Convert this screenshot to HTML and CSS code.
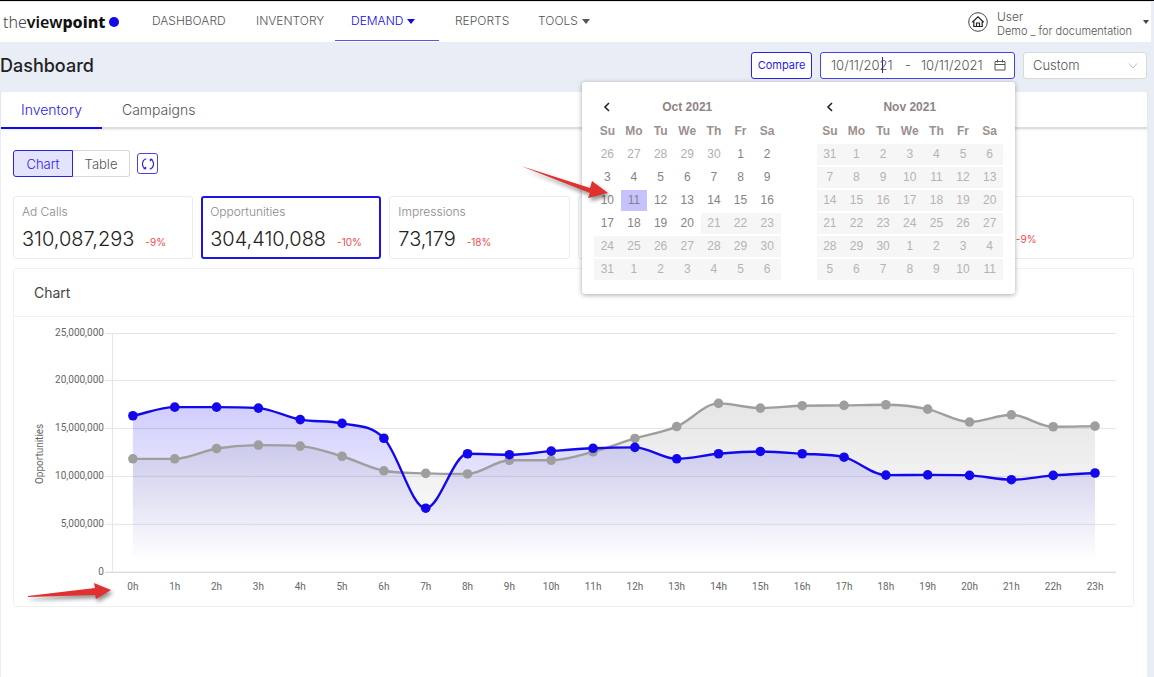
FILE: index.html
```html
<!DOCTYPE html>
<html lang="en">
<head>
    <meta charset="UTF-8">
    <meta name="viewport" content="width=device-width, initial-scale=1.0">
    <title>Dashboard</title>
    <link rel="stylesheet" href="styles.css">
</head>
<body>
    <header class="topbar">
        <a class="logo" href="#"><span class="logo-light">the</span><span class="logo-mid">view</span><span class="logo-bold">point</span><span class="logo-dot"></span></a>
        <nav class="menu">
            <a href="#">DASHBOARD</a>
            <a href="#">INVENTORY</a>
            <a href="#" class="active">DEMAND<span class="caret"></span></a>
            <a href="#">REPORTS</a>
            <a href="#">TOOLS<span class="caret"></span></a>
        </nav>
        <div class="user">
            <svg class="user-icon" viewBox="0 0 20 20" width="20" height="20">
                <circle cx="10" cy="10" r="9.3" fill="none" stroke="#444" stroke-width="1"/>
                <path d="M4.300 10.200L10 4.800l5.700 5.400M5.800 9.500V14.500H14.200V9.500M8.500 14.500v-3.500h3v3.500" fill="none" stroke="#222" stroke-width="1.200"/>
            </svg>
            <div class="user-text">
                <div class="user-name">User</div>
                <div class="user-account">Demo _ for documentation</div>
            </div>
            <span class="caret small"></span>
        </div>
    </header>

    <div class="titlebar">
        <h1>Dashboard</h1>
        <div class="filters">
            <button class="compare">Compare</button>
            <div class="range">
                <input type="text" aria-label="Start date" value="10/11/2021">
                <span class="dash">-</span>
                <input type="text" aria-label="End date" value="10/11/2021">
                <span class="text-cursor"></span>
                <svg viewBox="0 0 12 12" width="12" height="12" fill="none" stroke="#555">
                    <path d="M1 2.500h10v8.500h-10zM1 5.500h10M3.500 .5v3M8.500 .5v3"/>
                </svg>
                <div class="picker">
                    <div class="month" id="oct"></div>
                    <div class="month" id="nov"></div>
                    <svg class="pointer pointer-day" viewBox="0 0 92 34" width="92" height="34">
                        <path d="M1 1L70 23L72 16L88 28L68 33L70 28Z"/>
                    </svg>
                </div>
            </div>
            <div class="select">
                <select aria-label="Period">
                    <option>Custom</option>
                </select>
                <svg viewBox="0 0 10 6" width="10" height="6" fill="none" stroke="#bbb">
                    <path d="M1 .5l4 4.500l4-4.500"/>
                </svg>
            </div>
        </div>
    </div>

    <main>
        <div class="tabs">
            <a href="#" class="active">Inventory</a>
            <a href="#">Campaigns</a>
        </div>

        <div class="content">
            <div class="tools">
                <div class="toggle">
                    <button class="active">Chart</button>
                    <button>Table</button>
                </div>
                <button class="refresh" aria-label="Refresh">
                    <svg viewBox="0 0 14 14" width="14" height="14" fill="none" stroke="#2b20e8" stroke-width="1.200">
                        <path d="M5.300 1.800A5.400 5.400 0 0 0 4.300 11.700M8.700 12.200A5.400 5.400 0 0 0 9.700 2.300"/>
                        <path d="M2.600 11.700H4.600V9.700M11.400 2.300H9.400V4.300"/>
                    </svg>
                </button>
            </div>

            <div class="cards">
                <div class="card">
                    <div class="label">Ad Calls</div>
                    <div class="figures"><span class="value">310,087,293</span><span class="delta">-9%</span></div>
                </div>
                <div class="card active">
                    <div class="label">Opportunities</div>
                    <div class="figures"><span class="value">304,410,088</span><span class="delta">-10%</span></div>
                </div>
                <div class="card">
                    <div class="label">Impressions</div>
                    <div class="figures"><span class="value">73,179</span><span class="delta">-18%</span></div>
                </div>
                <div class="card"></div>
                <div class="card"></div>
                <div class="card">
                    <div class="label"></div>
                    <div class="figures"><span class="value"></span><span class="delta">-9%</span></div>
                </div>
            </div>

            <section class="panel">
                <h2>Chart</h2>
                <svg id="chart" viewBox="0 0 1120 289">
                    <defs>
                        <linearGradient id="blueFill" gradientUnits="userSpaceOnUse" x1="0" y1="88" x2="0" y2="244">
                            <stop offset="0" stop-color="#1308eb" stop-opacity="0.2"/>
                            <stop offset="1" stop-color="#1308eb" stop-opacity="0"/>
                        </linearGradient>
                        <linearGradient id="grayFill" gradientUnits="userSpaceOnUse" x1="0" y1="86" x2="0" y2="244">
                            <stop offset="0" stop-color="#808080" stop-opacity="0.2"/>
                            <stop offset="1" stop-color="#808080" stop-opacity="0"/>
                        </linearGradient>
                    </defs>
                </svg>
                <svg class="pointer pointer-axis" viewBox="0 0 90 24" width="90" height="24">
                    <path d="M1 14L68 6L67 1L84 8L69 17L68 13L1 15Z"/>
                </svg>
            </section>
        </div>
    </main>

    <script src="script.js"></script>
</body>
</html>
```
FILE: styles.css
```css
* {
    box-sizing: border-box;
}
body {
    margin: 0;
    min-height: 100vh;
    display: flex;
    flex-direction: column;
    font-family: Inter, "Open Sans", sans-serif;
    font-weight: 300;
    font-size: 13px;
    color: #555;
    background: #e9eef6;
    border-top: 1px solid #000;
}
a {
    color: inherit;
    text-decoration: none;
}
button, input, select {
    font: inherit;
    color: inherit;
    margin: 0;
}
.caret {
    display: inline-block;
    margin-left: 4px;
    border: 4px solid transparent;
    border-top: 5px solid currentColor;
    border-bottom: 0;
    vertical-align: 1px;
}
.caret.small {
    border-width: 4px 3px 0;
    color: #444;
}

/* top bar */
.topbar {
    display: flex;
    height: 41px;
    margin-right: 3px;
    background: #fff;
    border-top: 1px solid #e8e4ea;
}
.logo {
    display: flex;
    align-items: center;
    width: 136px;
    padding-left: 3px;
    font-family: "Noto Sans", sans-serif;
    font-size: 16px;
    color: #111;
}
.logo-light {
    color: #444;
}
.logo-mid {
    font-weight: 600;
}
.logo-bold {
    font-weight: 800;
}
.logo-dot {
    width: 10px;
    height: 10px;
    margin-left: 4px;
    border-radius: 50%;
    background: #1308eb;
}
.menu {
    display: grid;
    grid-template-columns: 104px 95px 104px 83px 90px;
    font-size: 12px;
    line-height: 38px;
}
.menu a {
    height: 39px;
    padding-left: 16px;
    border-bottom: 1px solid transparent;
    white-space: nowrap;
}
.menu .active {
    color: #1308eb;
    border-color: #5a52f0;
}
.user {
    display: flex;
    align-items: center;
    margin-left: auto;
    padding-right: 2px;
}
.user-text {
    width: 142px;
    margin-left: 9px;
    padding-top: 4px;
    font-size: 11px;
    line-height: 14px;
    white-space: nowrap;
}
.user-name {
    font-size: 12px;
}

/* title and filters */
.titlebar {
    display: flex;
    justify-content: space-between;
    align-items: center;
    height: 50px;
    padding: 0 7px 4px 0;
}
h1 {
    margin: 0;
    font-size: 18px;
    font-weight: 500;
    color: #222;
}
.filters {
    display: flex;
    align-items: center;
    gap: 8px;
}
.compare {
    width: 61px;
    height: 27px;
    padding: 0;
    font-size: 11px;
    font-weight: 400;
    color: #2b20e8;
    background: #fff;
    border: 1px solid #2b20e8;
    border-radius: 3px;
}
.range {
    position: relative;
    display: flex;
    align-items: center;
    width: 195px;
    height: 27px;
    padding-left: 10px;
    background: #fff;
    border: 1px solid #4a40ee;
    border-radius: 3px;
}
.range input {
    width: 68px;
    padding: 0;
    border: 0;
    outline: 0;
    background: none;
}
.dash {
    width: 22px;
    padding-left: 6px;
}
.text-cursor {
    position: absolute;
    left: 61px;
    top: 4px;
    width: 1px;
    height: 16px;
    background: #2b20e8;
}
.range > svg {
    margin-left: 5px;
}
.select {
    position: relative;
    width: 124px;
}
.select select {
    display: block;
    width: 100%;
    height: 27px;
    padding: 0 9px;
    appearance: none;
    background: #fff;
    border: 1px solid #d9d9d9;
    border-radius: 3px;
}
.select svg {
    position: absolute;
    right: 9px;
    top: 11px;
}

/* date picker */
.picker {
    position: absolute;
    top: 29px;
    right: -1px;
    z-index: 2;
    display: flex;
    gap: 36px;
    width: 433px;
    height: 212px;
    padding: 13px 12px 12px;
    background: #fff;
    border-radius: 3px;
    box-shadow: 0 1px 5px rgba(0, 0, 0, 0.35);
    font-family: "Liberation Sans", Arial, sans-serif;
    font-size: 12px;
    font-weight: 400;
}
.month {
    flex: 1;
}
.month-head {
    display: flex;
    align-items: center;
    height: 24px;
    font-weight: 700;
    color: #8f8484;
}
.month-head span {
    flex: 1;
    padding-right: 26px;
    text-align: center;
}
.month-head button {
    width: 26px;
    height: 20px;
    padding: 0;
    border: 0;
    background: none;
}
.month-head svg {
    display: block;
    margin: auto;
}
.month table {
    width: 100%;
    table-layout: fixed;
    border-collapse: separate;
    border-spacing: 0 2px;
    text-align: center;
}
.month th, .month td {
    height: 21px;
    padding: 0;
    line-height: 21px;
}
.month th {
    color: #9c9090;
}
.month td {
    color: #848484;
}
.month .outside {
    color: #b0b0b0;
}
.month .disabled {
    color: #b4b4b4;
    background: #f6f6f6;
}
.month .selected {
    background: #c6c3fc;
}

/* red arrows */
.pointer {
    position: absolute;
    overflow: visible;
    fill: #e03030;
    filter: drop-shadow(2px 3px 2px rgba(0, 0, 0, 0.45));
}
.pointer-day {
    left: -62px;
    top: 83px;
}
.pointer-axis {
    left: 13px;
    bottom: 0;
}

/* main area */
main {
    flex: 1;
    margin: 0 7px 0 1px;
    background: #fff;
    border-radius: 3px 3px 0 0;
}
.tabs {
    display: flex;
    height: 37px;
    border-bottom: 2px solid #dedede;
    box-shadow: 0 1px 2px rgba(0, 0, 0, 0.08);
    font-size: 14px;
    line-height: 36px;
}
.tabs a {
    height: 37px;
    padding: 0 20px;
}
.tabs .active {
    color: #2b20e8;
    border-bottom: 2px solid #1308eb;
}
.content {
    padding: 21px 13px 0 12px;
}
.tools {
    display: flex;
    align-items: center;
    gap: 7px;
}
.toggle {
    display: flex;
}
.toggle button {
    width: 57px;
    height: 27px;
    padding: 0;
    background: #fff;
    border: 1px solid #d9d9d9;
    border-left: 0;
    border-radius: 0 3px 3px 0;
}
.toggle .active {
    width: 60px;
    color: #2b20e8;
    background: #e4e3fc;
    border: 1px solid #2b20e8;
    border-radius: 3px 0 0 3px;
}
.refresh {
    display: flex;
    align-items: center;
    justify-content: center;
    width: 21px;
    height: 21px;
    padding: 0;
    background: #fff;
    border: 1px solid #4a40ee;
    border-radius: 3px;
}
.cards {
    display: grid;
    grid-template-columns: repeat(6, 1fr);
    gap: 8px;
    margin: 19px 0 9px;
}
.card {
    height: 63px;
    padding: 6px 8px;
    border: 1px solid #ececec;
    border-radius: 3px;
}
.card.active {
    padding: 5px 7px;
    border: 2px solid #1f14e6;
}
.label {
    height: 17px;
    font-size: 12px;
    line-height: 17px;
    color: #888;
}
.figures {
    display: flex;
    align-items: baseline;
    gap: 11px;
    line-height: 38px;
}
.value {
    min-width: 42px;
    font-size: 20px;
    color: #222;
}
.delta {
    font-size: 10px;
    font-weight: 400;
    color: #f5484c;
}
.panel {
    position: relative;
    border: 1px solid #f0f0f0;
    border-radius: 3px;
}
h2 {
    margin: 0;
    padding-left: 20px;
    font-size: 14px;
    font-weight: 400;
    line-height: 47px;
    color: #444;
    border-bottom: 1px solid #f0f0f0;
}

/* chart */
#chart {
    display: block;
    width: 100%;
    height: auto;
}
#chart text {
    font-family: Roboto, sans-serif;
    font-size: 10px;
    font-weight: 400;
    fill: #666;
}
#chart .grid {
    stroke: #e4e4e4;
}
#chart .base {
    stroke: #cfcfcf;
}
#chart .line {
    fill: none;
    stroke-width: 2.4;
}
```
FILE: script.js
```js
const NS = "http://www.w3.org/2000/svg";
const chart = document.getElementById("chart");

// millions per hour
const opportunities = [16.3, 17.2, 17.2, 17.1, 15.9, 15.5, 13.95, 6.64, 12.33, 12.23, 12.6, 12.9,
    13, 11.8, 12.33, 12.57, 12.33, 11.97, 10.1, 10.12, 10.07, 9.62, 10.07, 10.32];
const previous = [11.8, 11.8, 12.88, 13.23, 13.13, 12.07, 10.55, 10.28, 10.22, 11.65, 11.65, 12.54,
    13.93, 15.17, 17.59, 17.1, 17.35, 17.38, 17.45, 16.99, 15.64, 16.4, 15.15, 15.22];

const left = 119;
const step = 41.87;
const bottom = 255;
const perMillion = 9.58;

function add(name, attrs, text) {
    const el = document.createElementNS(NS, name);
    for (const key in attrs) {
        el.setAttribute(key, attrs[key]);
    }
    if (text) {
        el.textContent = text;
    }
    chart.appendChild(el);
}

// monotone cubic curve through the points
function curve(points) {
    const n = points.length;
    const slopes = [];
    for (let i = 0; i < n - 1; i++) {
        slopes.push((points[i + 1][1] - points[i][1]) / step);
    }
    const tangents = [slopes[0]];
    for (let i = 1; i < n - 1; i++) {
        const a = slopes[i - 1];
        const b = slopes[i];
        tangents.push(a * b <= 0 ? 0 : Math.sign(a) * Math.min(Math.abs(a + b) / 2, 3 * Math.abs(a), 3 * Math.abs(b)));
    }
    tangents.push(slopes[n - 2]);

    let d = "M" + points[0];
    for (let i = 0; i < n - 1; i++) {
        const [x1, y1] = points[i];
        const [x2, y2] = points[i + 1];
        const h = step / 3;
        d += `C${x1 + h},${y1 + tangents[i] * h} ${x2 - h},${y2 - tangents[i + 1] * h} ${x2},${y2}`;
    }
    return d;
}

function toPoints(data) {
    return data.map((v, i) => [left + i * step, bottom - v * perMillion]);
}

function drawArea(data, fill) {
    const end = left + step * (data.length - 1);
    add("path", { d: `${curve(toPoints(data))}L${end},${bottom}L${left},${bottom}Z`, fill: fill });
}

function drawLine(data, color) {
    const points = toPoints(data);
    add("path", { d: curve(points), class: "line", stroke: color });
    points.forEach(([x, y]) => add("circle", { cx: x, cy: y, r: 4.8, fill: color }));
}

function drawAxes() {
    for (let i = 0; i <= 5; i++) {
        const y = Math.round(bottom - i * 5 * perMillion) + 0.5;
        add("line", { x1: 91, x2: 1103, y1: y, y2: y, class: i ? "grid" : "base" });
        add("text", { x: 90, y: y + 3, "text-anchor": "end" }, (i * 5000000).toLocaleString("en-US"));
    }
    add("line", { x1: 98.5, x2: 98.5, y1: 16, y2: 255, class: "grid" });
    for (let i = 0; i < 24; i++) {
        add("text", { x: left + i * step, y: 273, "text-anchor": "middle" }, i + "h");
    }
    add("text", { x: 0, y: 0, transform: "translate(29 137) rotate(-90)", "text-anchor": "middle" }, "Opportunities");
}

// firstDay is the date in the first cell, lastEnabled the last cell that can be picked
function drawMonth(id, title, firstDay, prevLength, length, lastEnabled, selected) {
    let html = `<div class="month-head"><button aria-label="Previous month">
        <svg viewBox="0 0 8 10" width="8" height="10" fill="none" stroke="#222" stroke-width="1.6"><path d="M6 1L2 5L6 9"/></svg>
        </button><span>${title}</span></div><table><tr>`;
    ["Su", "Mo", "Tu", "We", "Th", "Fr", "Sa"].forEach(d => html += `<th>${d}</th>`);
    const offset = prevLength - firstDay + 1;
    for (let i = 0; i < 42; i++) {
        let day = i - offset + 1;
        let cls = "";
        if (day < 1) {
            day += prevLength;
            cls = "outside";
        } else if (day === selected) {
            cls = "selected";
        } else if (day > length) {
            day -= length;
        }
        if (i >= lastEnabled) {
            cls = "disabled";
        }
        html += (i % 7 === 0 ? "</tr><tr>" : "") + `<td class="${cls}">${day}</td>`;
    }
    document.getElementById(id).innerHTML = html + "</tr></table>";
}

drawAxes();
drawArea(previous, "url(#grayFill)");
drawArea(opportunities, "url(#blueFill)");
drawLine(previous, "#9e9e9e");
drawLine(opportunities, "#1308eb");
drawMonth("oct", "Oct 2021", 26, 30, 31, 25, 11);
drawMonth("nov", "Nov 2021", 31, 31, 30, 0, 0);
```
